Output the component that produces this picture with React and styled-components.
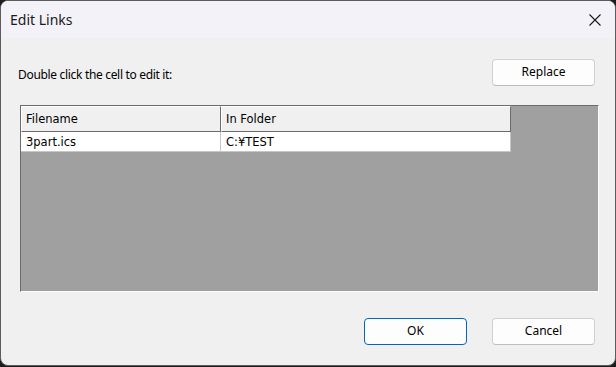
import React from 'react'
import styled, { createGlobalStyle } from 'styled-components'

const GlobalStyle = createGlobalStyle`
html, body {
    margin: 0;
    padding: 0;
    background: #1c1c1c;
    width: 616px;
    height: 367px;
    overflow: hidden;
}
* { box-sizing: border-box; }
`

const Window = styled.div`
width: 616px;
height: 366px;
display: flex;
flex-direction: column;
background: #f0f0f0;
border: 1px solid #5c5c5c;
border-radius: 8px;
overflow: hidden;
font-family: "Noto Sans", sans-serif;
color: #000;
`

const TitleBar = styled.div`
height: 37px;
flex: none;
display: flex;
align-items: center;
justify-content: space-between;
background: #f3f2f8;
padding-left: 9px;
`

const Title = styled.span`
font-size: 14px;
color: #1a1a1a;
`

const CloseButton = styled.div`
width: 44px;
height: 37px;
display: flex;
align-items: center;
justify-content: center;
margin-right: -2px;
svg { display: block; }
`

const Body = styled.div`
flex: 1;
display: flex;
flex-direction: column;
padding: 21px 16px 0 19px;
`

const TopRow = styled.div`
display: flex;
align-items: center;
justify-content: space-between;
padding-right: 4px;
`

const Label = styled.span`
font-size: 12px;
letter-spacing: -0.32px;
margin-left: -2px;
margin-top: 3px;
`

const Button = styled.button`
width: 103px;
height: 27px;
font-family: "Noto Sans", sans-serif;
font-size: 12px;
color: #000;
background: #fdfdfd;
border: 1px solid ${props => props.primary ? '#0067c0' : '#d0d0d0'};
border-bottom-color: ${props => props.primary ? '#0067c0' : '#bdbdbd'};
border-radius: 4px;
padding: 0 0 2px;
`

const GridFrame = styled.div`
margin-top: 19px;
height: 187px;
background: #a0a0a0;
border-top: 1px solid #6b6b6b;
border-left: 1px solid #6b6b6b;
border-bottom: 1px solid #fbfbfb;
border-right: 1px solid #fbfbfb;
`

const Table = styled.div`
display: grid;
grid-template-columns: 200px 290px;
width: 490px;
font-family: "DejaVu Sans", Verdana, sans-serif;
font-size: 11.5px;
color: #000;
`

const HeaderCell = styled.div`
height: 26px;
display: flex;
align-items: center;
padding-left: 4px;
background: #f0f0f0;
border-top: 1px solid #ffffff;
border-left: 1px solid #ffffff;
border-right: 1px solid #6b6b6b;
border-bottom: 1px solid #6b6b6b;
`

const Cell = styled.div`
height: 20px;
display: flex;
align-items: center;
padding-left: 5px;
padding-top: 1px;
background: #ffffff;
border-right: 1px solid #c6c6c6;
border-bottom: 1px solid #c6c6c6;
`

const BottomRow = styled.div`
margin-top: 26px;
display: flex;
justify-content: flex-end;
gap: 25px;
padding-right: 4px;
`

const links = [{ file: '3part.ics', folder: 'C:¥TEST' }]

export default function App() {
    return (
        <>
            <GlobalStyle />
            <Window>
                <TitleBar>
                    <Title>Edit Links</Title>
                    <CloseButton>
                        <svg width="12" height="12" viewBox="0 0 12 12">
                            <path d="M0.5 0.5 L11.5 11.5 M11.5 0.5 L0.5 11.5" stroke="#1a1a1a" strokeWidth="1.1" fill="none" />
                        </svg>
                    </CloseButton>
                </TitleBar>
                <Body>
                    <TopRow>
                        <Label>Double click the cell to edit it:</Label>
                        <Button>Replace</Button>
                    </TopRow>
                    <GridFrame>
                        <Table>
                            <HeaderCell>Filename</HeaderCell>
                            <HeaderCell>In Folder</HeaderCell>
                            {links.map(l => (
                                <React.Fragment key={l.file}>
                                    <Cell>{l.file}</Cell>
                                    <Cell>{l.folder}</Cell>
                                </React.Fragment>
                            ))}
                        </Table>
                    </GridFrame>
                    <BottomRow>
                        <Button primary>OK</Button>
                        <Button>Cancel</Button>
                    </BottomRow>
                </Body>
            </Window>
        </>
    )
}
